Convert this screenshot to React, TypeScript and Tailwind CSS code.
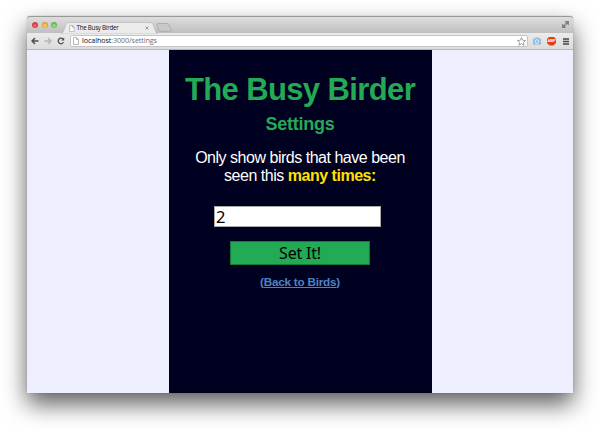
import React from 'react';

function PageIcon({ className }: { className: string }) {
  return (
    <svg className={className} viewBox="0 0 6 8" fill="#fff" stroke="#999" strokeWidth=".7">
      <path d="M.5.5h3l2 2v5h-5z M3.5.5v2h2" />
    </svg>
  );
}

function Light({ className }: { className: string }) {
  return <span className={`h-[6px] w-[6px] rounded-full ${className}`} />;
}

function TabBar() {
  return (
    <div className="relative flex h-[17px] shrink-0 rounded-t-[3px] border-t border-[#999] bg-linear-to-b from-[#dedede] to-[#bfbfbf]">
      <div className="flex h-[16px] w-[34px] items-center gap-[3.5px] pl-[5px]">
        <Light className="bg-[radial-gradient(circle_at_50%_60%,#ff7078,#dd3843_50%,#b84850)]" />
        <Light className="bg-[radial-gradient(circle_at_50%_60%,#ffd870,#e5a03c_55%,#b88440)]" />
        <Light className="bg-[radial-gradient(circle_at_50%_60%,#a8e890,#67b957_55%,#58944c)]" />
      </div>
      <div className="relative mt-[5px] h-[11px] w-[97px]">
        <svg className="absolute inset-0" width="97" height="12" viewBox="0 0 97 12">
          <path d="M0 12Q2 11 3 8L5 2.5Q6 .5 8 .5H89Q91 .5 92 2.5L94.500 9Q95.500 11.500 97 12Z" fill="#ebebeb" stroke="#aaa" strokeWidth=".5" />
        </svg>
        <div className="relative flex h-[11px] items-center pl-[8px] pt-[1px]">
          <PageIcon className="h-[7px] w-[6px]" />
          <span className="ml-[1.500px] whitespace-nowrap font-['Open_Sans',sans-serif] text-[6.200px] leading-none tracking-[-0.24px] text-[#111]">The Busy Birder</span>
          <svg className="ml-auto mr-[9px]" width="4" height="4" viewBox="0 0 4 4" stroke="#888" strokeWidth=".8">
            <path d="M.5.5l3 3M3.500.5l-3 3" />
          </svg>
        </div>
      </div>
      <svg className="-ml-[2px] mt-[6px]" width="16" height="9" viewBox="0 0 16 9">
        <path d="M.8 1.500Q1 .5 2 .5H11.500Q12.500 .5 13 1.500L15.200 7Q15.500 8.300 14.500 8.300H5Q3.500 8.300 3 7Z" fill="#c9c9c9" stroke="#a2a2a2" strokeWidth=".7" />
      </svg>
      <svg className="ml-auto mr-[4px] mt-[4px]" width="7" height="7" viewBox="0 0 7 7" fill="#808080">
        <path d="M2.500 0H7V4.500L5.600 3.100L4.400 4.200L2.900 2.700L4 1.500ZM0 2.800L1.300 4L2.300 3.100L3.800 4.600L2.900 5.600L4.200 7H0Z" />
      </svg>
    </div>
  );
}

function Toolbar() {
  return (
    <div className="flex h-[17px] shrink-0 items-center border-b border-[#b5b5b5] bg-linear-to-b from-[#ebebeb] to-[#dcdcdc] pl-[4px] pr-[4px]">
      <svg width="8" height="8" viewBox="0 0 8 8" fill="none" stroke="#4e4e4e" strokeWidth="1.500">
        <path d="M7.500 4H1M4 1L1 4L4 7" />
      </svg>
      <svg className="ml-[5px]" width="8" height="8" viewBox="0 0 8 8" fill="none" stroke="#b5b5b5" strokeWidth="1.500">
        <path d="M.5 4H7M4 1L7 4L4 7" />
      </svg>
      <svg className="ml-[5px]" width="8" height="8" viewBox="0 0 8 8">
        <path d="M6.500 5.300A2.800 2.800 0 1 1 6 2" fill="none" stroke="#505050" strokeWidth="1.300" />
        <path d="M7.200 .5V3.500H4.200Z" fill="#505050" />
      </svg>
      <div className="ml-[5px] flex h-[12px] flex-1 items-center rounded-[2px] border-[0.5px] border-[#c5c5c5] bg-white pl-[2px] pr-[1px]">
        <PageIcon className="h-[8px] w-[6px]" />
        <span className="ml-[3px] whitespace-nowrap font-['Open_Sans',sans-serif] text-[7.200px] leading-none tracking-[-0.1px] text-[#707070]">
          <span className="text-[#111]">localhost</span>:3000/settings
        </span>
        <svg className="ml-auto" width="9" height="9" viewBox="0 0 9 9" fill="#fff" stroke="#8c8c8c" strokeWidth=".8">
          <path d="M4.500 .6L5.700 3.300L8.600 3.500L6.400 5.400L7.100 8.300L4.500 6.700L1.900 8.300L2.600 5.400L.4 3.500L3.300 3.300Z" />
        </svg>
      </div>
      <svg className="ml-[5px]" width="8" height="8" viewBox="0 0 8 8">
        <path d="M0 2Q0 1.500 .6 1.500H2L2.700 .5H5.300L6 1.500H7.400Q8 1.500 8 2V7Q8 7.500 7.400 7.500H.6Q0 7.500 0 7Z" fill="#90bee3" />
        <circle cx="4" cy="4.500" r="1.800" fill="#90bee3" stroke="#f0f8ff" strokeWidth=".8" />
      </svg>
      <span className="ml-[6px] flex h-[9px] w-[9px] items-center justify-center bg-[#e63e12] font-['Liberation_Sans',sans-serif] text-[4px] font-bold leading-none tracking-[-0.2px] text-white [clip-path:polygon(28%_0,72%_0,100%_28%,100%_72%,72%_100%,28%_100%,0_72%,0_28%)]">ABP</span>
      <svg className="ml-[7px]" width="6" height="7" viewBox="0 0 6 7" stroke="#444" strokeWidth="1.300">
        <path d="M0 1H6M0 3.500H6M0 6H6" />
      </svg>
    </div>
  );
}

export default function App() {
  return (
    <div className="h-[430px] w-[600px] overflow-hidden bg-white px-[27px] pt-[16px]">
      <div className="flex h-[377px] w-[546px] flex-col rounded-t-[3px] bg-[#edefff] shadow-[0_11px_23px_rgba(0,0,0,0.64),0_0_1px_rgba(0,0,0,0.5)]">
        <TabBar />
        <Toolbar />
        <main className="ml-[142px] flex w-[263px] flex-1 flex-col items-center bg-[#000020] pr-[1px] font-['Liberation_Sans',Arial,sans-serif]">
          <h1 className="mt-[23px] whitespace-nowrap text-[31px] font-bold leading-[34px] tracking-[-0.620px] text-[#23aa55]">The Busy Birder</h1>
          <h2 className="mt-[7px] text-[18px] font-bold leading-[20px] tracking-[-0.250px] text-[#23aa55]">Settings</h2>
          <p className="mt-[15px] whitespace-nowrap text-center text-[16px] leading-[17.500px] tracking-[-0.480px] text-white">
            Only show birds that have been<br />
            seen this <strong className="text-[#ffe000]">many times:</strong>
          </p>
          <input
            defaultValue="2"
            className="mr-[5px] mt-[22px] h-[21px] w-[167px] shrink-0 border border-[#aaa] bg-white px-[1px] font-['Noto_Sans',sans-serif] text-[16.500px] leading-none text-black outline-none"
          />
          <button className="mt-[14px] flex h-[24px] w-[140px] shrink-0 items-center justify-center border border-[#147a3c] bg-[#23aa55] pb-[1px] font-['Noto_Sans',sans-serif] text-[16px] leading-none tracking-[-0.200px] text-black">Set It!</button>
          <a className="mt-[10px] text-[11.700px] font-bold leading-[14px] tracking-[-0.220px] text-[#4d83c4]">(<span className="underline">Back to Birds</span>)</a>
        </main>
      </div>
    </div>
  );
}
